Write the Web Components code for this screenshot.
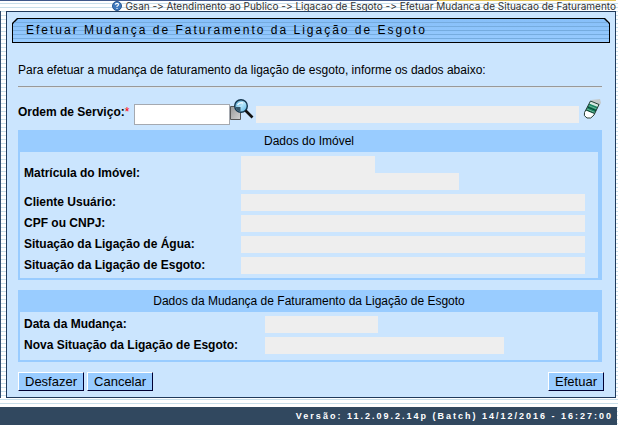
<!DOCTYPE html>
<html lang="pt-BR">
<head>
<meta charset="utf-8">
<title>Gsan - Efetuar Mudança de Situação de Faturamento</title>
<style>
body {
  margin: 0;
  font: 12px/16px "Liberation Sans", Arial, sans-serif;
  color: #000;
  background: repeating-linear-gradient(#fff 0 3px, #c9dfea 3px 4px);
}
</style>
</head>
<body>
<gsan-page>
  <gsan-breadcrumb slot="top">Gsan -&gt; Atendimento ao Publico -&gt; Ligacao de Esgoto -&gt; Efetuar Mudanca de Situacao de Faturamento</gsan-breadcrumb>
  <gsan-title>Efetuar Mudança de Faturamento da Ligação de Esgoto</gsan-title>
  <gsan-order-form>
    <span slot="intro">Para efetuar a mudança de faturamento da ligação de esgoto, informe os dados abaixo:</span>
    <gsan-section>
      <span slot="title">Dados do Imóvel</span>
      <gsan-field label="Matrícula do Imóvel:" widths="134 218"></gsan-field>
      <gsan-field label="Cliente Usuário:"></gsan-field>
      <gsan-field label="CPF ou CNPJ:"></gsan-field>
      <gsan-field label="Situação da Ligação de Água:"></gsan-field>
      <gsan-field label="Situação da Ligação de Esgoto:"></gsan-field>
    </gsan-section>
    <gsan-section style="--label-width: 241px; --body-end: 6px">
      <span slot="title">Dados da Mudança de Faturamento da Ligação de Esgoto</span>
      <gsan-field label="Data da Mudança:" widths="113"></gsan-field>
      <gsan-field label="Nova Situação da Ligação de Esgoto:" widths="239"></gsan-field>
    </gsan-section>
  </gsan-order-form>
  <gsan-footer slot="bottom">Versão: 11.2.09.2.14p (Batch) 14/12/2016 - 16:27:00</gsan-footer>
</gsan-page>

<script>
function attach(el, html) {
  const tpl = document.createElement("template");
  tpl.innerHTML = html;
  el.attachShadow({ mode: "open" }).append(tpl.content.cloneNode(true));
}

class GsanPage extends HTMLElement {
  constructor() {
    super();
    attach(this, `
<style>
:host {
  display: block;
}
.frame {
  display: flex;
  padding-right: 2px;
  border-left: 1px solid #304a6c;
}
main {
  flex: 1;
  min-width: 0;
  margin-left: 5px;
  padding: 6px 5px 6px;
  border: 1px solid #203a5c;
  background: #cbe5fe;
}
</style>
<slot name="top"></slot>
<div class="frame">
  <main><slot></slot></main>
</div>
<slot name="bottom"></slot>
`);
  }
}

class GsanBreadcrumb extends HTMLElement {
  constructor() {
    super();
    attach(this, `
<style>
:host {
  display: block;
  color: #333;
  font-family: Inter, "Liberation Sans", sans-serif;
  font-size: 10px;
  font-variant-ligatures: none;
  line-height: 10px;
}
.bar {
  height: 1px;
  margin-right: 2px;
  background: linear-gradient(to right, #40588a 71%, #e3c45c 71%);
}
nav {
  display: flex;
  justify-content: flex-end;
  gap: 3px;
  height: 10px;
  padding-right: 2px;
  white-space: nowrap;
}
svg {
  flex: none;
}
</style>
<div class="bar"></div>
<nav>
  <svg width="10" height="10" viewBox="0 0 10 10" aria-hidden="true">
    <circle cx="5" cy="5" r="4.5" fill="#3f79bd" stroke="#28568f"/>
    <path d="M2 3.5a3.4 3.4 0 0 1 6 0Q5 1.8 2 3.5" fill="#8fb9e4"/>
    <path d="M3.5 3.8Q3.6 2.4 5 2.4T6.5 3.7Q6.5 4.5 5 5.3V6M5 7v1" fill="none" stroke="#fff" stroke-width="1.1"/>
  </svg>
  <span><slot></slot></span>
</nav>
`);
  }
}

class GsanTitle extends HTMLElement {
  constructor() {
    super();
    attach(this, `
<style>
:host {
  display: block;
}
.edge, h1 {
  clip-path: polygon(0 5px, 5px 0, calc(100% - 5px) 0, 100% 5px, 100% 100%, 0 100%);
}
.edge {
  padding: 1px;
  background: #000;
}
h1 {
  margin: 0;
  padding: 3px 13px 4px;
  font-size: 12px;
  font-weight: normal;
  line-height: 16px;
  letter-spacing: 2px;
  background:
    repeating-linear-gradient(transparent 0 3px, #76acdf 3px 4px),
    linear-gradient(#86bff9, #99ccff);
}
</style>
<div class="edge"><h1><slot></slot></h1></div>
`);
  }
}

class GsanOrderForm extends HTMLElement {
  constructor() {
    super();
    attach(this, `
<style>
:host {
  display: block;
  padding: 19px 8px 0 6px;
}
p {
  margin: 0;
}
hr {
  height: 1px;
  margin: 8px 0 10px;
  border: 0;
  border-top: 1px solid #999;
  background: #d8e4ee;
}
.order {
  display: flex;
  align-items: flex-start;
  height: 32px;
}
label {
  width: 116px;
  padding-top: 6px;
  font-weight: bold;
  white-space: nowrap;
}
.required {
  color: #f00;
  font-weight: normal;
}
input {
  box-sizing: border-box;
  border: 0;
  font: inherit;
}
#order {
  width: 96px;
  height: 21px;
  margin-top: 6px;
  padding: 1px 2px;
  border: 1px solid #a5a9b0;
  background: #fff;
}
#description {
  flex: 1;
  min-width: 0;
  height: 17px;
  margin: 8px 4px 0 2px;
  background: #eee;
}
.icon {
  flex: none;
  padding: 0;
  border: 0;
  background: none;
}
.icon svg {
  display: block;
}
.sections {
  display: flex;
  flex-direction: column;
  gap: 10px;
}
.buttons {
  display: flex;
  gap: 3px;
  margin: 10px -2px 0 0;
}
.buttons button {
  padding: 1px 6px 0;
  border: 1px solid #003;
  border-color: #fff #003 #003 #fff;
  font: 13px/16px "Liberation Sans", Arial, sans-serif;
  color: #000;
  background: #99ccff;
}
.submit {
  margin-left: auto;
}
</style>
<p><slot name="intro"></slot></p>
<hr>
<form>
  <div class="order">
    <label for="order">Ordem de Serviço:<span class="required">*</span></label>
    <input id="order" type="text">
    <button class="icon" type="button" aria-label="Pesquisar">
      <svg width="24" height="23" viewBox="0 0 24 23">
        <defs>
          <linearGradient id="glass" x2="1" y2="1">
            <stop stop-color="#3488bb"/><stop offset=".5" stop-color="#b5e6fb"/><stop offset="1" stop-color="#4dade0"/>
          </linearGradient>
          <linearGradient id="paper" x2="1" y2="1">
            <stop stop-color="#999"/><stop offset="1" stop-color="#d3d3d3"/>
          </linearGradient>
        </defs>
        <path d="M.5 8.5h10v13H.5z" fill="url(#paper)" stroke="#555"/>
        <circle cx="11" cy="8" r="6.3" fill="url(#glass)" stroke="#14364e" stroke-width="1.4"/>
        <path d="M5.500 9h5v4.500Q6.500 13 5.500 9" fill="#34566c"/>
        <path d="M7.500 7Q9 4 13 5" fill="none" stroke="#effaff" stroke-width="1.5"/>
        <path d="m15.500 12.500 7 7" stroke="#111" stroke-width="2.6"/>
      </svg>
    </button>
    <input id="description" type="text" readonly aria-label="Descrição da ordem de serviço">
    <button class="icon" type="button" aria-label="Apagar">
      <svg width="19" height="23" viewBox="0 0 19 23">
        <path d="m8 2 9-1 1 4-4 6Z" fill="#c4c8c9"/>
        <path d="m7.500 3 8.500 3.500-5 10.500Q8 21.500 4 20 0 18 1.500 14.500Z" fill="#fff"/>
        <path d="M7.500 3 16 6.500l-1 3L6.500 5Z" fill="#d5e8df"/>
        <path d="M6.200 5.500 14.900 9l-3.200 6.500L3 12Z" fill="#198462"/>
        <path d="m5.500 7.500 8.500 3.500m-10 0 8 3.500" stroke="#71b99a"/>
        <path d="m4.500 9 8.500 3.500M3 12l8.500 3.500" stroke="#07422f"/>
        <path d="m7.500 3 8.500 3.500-5 10.500Q8 21.500 4 20 0 18 1.500 14.500Z" fill="none" stroke="#243b33"/>
      </svg>
    </button>
  </div>
  <div class="sections"><slot></slot></div>
  <div class="buttons">
    <button type="reset">Desfazer</button>
    <button type="button">Cancelar</button>
    <button class="submit" type="button">Efetuar</button>
  </div>
</form>
`);
  }
}

class GsanSection extends HTMLElement {
  constructor() {
    super();
    attach(this, `
<style>
:host {
  display: block;
  padding: 0 4px 2px 2px;
  background: #99ccff;
}
h2 {
  margin: 0;
  padding: 3px 0;
  font-size: 12px;
  font-weight: normal;
  line-height: 16px;
  text-align: center;
}
.body {
  display: flex;
  flex-direction: column;
  gap: 4px;
  padding: 4px 13px var(--body-end, 4px) 4px;
  background: #cbe5fe;
}
</style>
<h2><slot name="title"></slot></h2>
<div class="body"><slot></slot></div>
`);
  }
}

// read-only value; "widths" lists one box per line, none means full width
class GsanField extends HTMLElement {
  constructor() {
    super();
    attach(this, `
<style>
:host {
  display: flex;
  align-items: center;
}
label {
  flex: none;
  width: var(--label-width, 217px);
  padding-bottom: 1px;
  font-weight: bold;
}
.values {
  flex: 1;
  min-width: 0;
}
input {
  display: block;
  box-sizing: border-box;
  width: 100%;
  height: 17px;
  padding: 0 2px;
  border: 0;
  font: inherit;
  background: #eee;
}
</style>
<label for="value0"></label>
<div class="values"></div>
`);
    const labelEl = this.shadowRoot.querySelector("label");
    const valuesEl = this.shadowRoot.querySelector(".values");
    const label = this.getAttribute("label");
    labelEl.textContent = label;

    const widths = (this.getAttribute("widths") || "").split(" ");
    widths.forEach((width, i) => {
      const input = document.createElement("input");
      input.id = `value${i}`;
      input.readOnly = true;
      if (width) {
        input.style.maxWidth = `${width}px`;
      }
      if (i > 0) {
        input.setAttribute("aria-label", label);
      }
      valuesEl.append(input);
    });
  }
}

class GsanFooter extends HTMLElement {
  constructor() {
    super();
    attach(this, `
<style>
:host {
  display: block;
  margin: 9px 1px 0 0;
  padding: 1px 4px 1px 0;
  color: #fff;
  font-size: 9px;
  font-weight: bold;
  line-height: 16px;
  letter-spacing: 2px;
  text-align: right;
  background: #31485f;
}
</style>
<footer><slot></slot></footer>
`);
  }
}

customElements.define("gsan-page", GsanPage);
customElements.define("gsan-breadcrumb", GsanBreadcrumb);
customElements.define("gsan-title", GsanTitle);
customElements.define("gsan-order-form", GsanOrderForm);
customElements.define("gsan-section", GsanSection);
customElements.define("gsan-field", GsanField);
customElements.define("gsan-footer", GsanFooter);
</script>
</body>
</html>
